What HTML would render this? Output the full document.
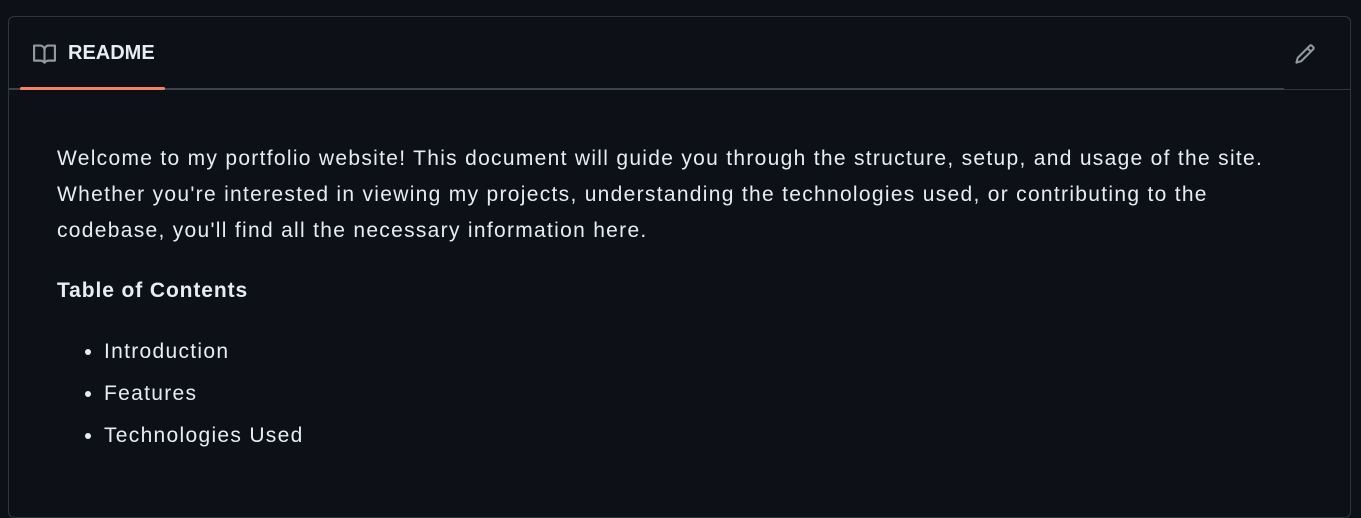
<!DOCTYPE html>
<html><head><style>
html,body{margin:0;background:#0d1117;width:1361px;height:476px;overflow:hidden;font-family:"Liberation Sans",sans-serif;color:#e6edf3}
.box{position:absolute;left:8px;top:16px;width:1341px;height:500px;border:1px solid #30363d;border-radius:6px;}
.hdr{position:absolute;left:0;top:0;right:0;height:72px;border-bottom:1px solid #30363d}
.line2{position:absolute;left:0;top:71px;width:1275px;height:2px;background:#3d434b}
.tab{position:absolute;left:11px;top:0;width:145px;height:72px}
.tab .ul{position:absolute;left:0;bottom:-1px;width:145px;height:3px;background:#f78166;border-radius:2px}
.tab span{position:absolute;left:48px;top:25px;font-weight:bold;font-size:20px}
.tab svg{position:absolute;left:12px;top:26px}
.pen{position:absolute;left:1285px;top:26px}
.c{position:absolute;left:48px;top:124px;width:1280px;font-size:21px;line-height:36px;letter-spacing:1.3px;white-space:nowrap}
p{margin:0}
ul{margin:0;padding-left:47px;line-height:42px}
</style></head><body>
<div class="box">
<div class="hdr"></div><div class="line2"></div>
<div class="tab"><svg width="25" height="23" viewBox="0 0 16 16" fill="#9198a1"><path d="M0 1.75A.75.75 0 0 1 .75 1h4.253c1.227 0 2.317.59 3 1.501A3.743 3.743 0 0 1 11.006 1h4.245a.75.75 0 0 1 .75.75v10.5a.75.75 0 0 1-.75.75h-4.507a2.25 2.25 0 0 0-1.591.659l-.622.621a.75.75 0 0 1-1.06 0l-.622-.621A2.25 2.25 0 0 0 5.258 13H.75a.75.75 0 0 1-.75-.75Zm7.251 10.324.004-5.073-.002-2.253A2.25 2.25 0 0 0 5.003 2.5H1.5v9h3.757a3.75 3.75 0 0 1 1.994.574ZM8.755 4.75l-.004 7.322a3.752 3.752 0 0 1 1.992-.572H14.5v-9h-3.495a2.25 2.25 0 0 0-2.25 2.25Z"/></svg><span>README</span><div class="ul"></div></div>
<svg class="pen" width="22" height="22" viewBox="0 0 16 16" fill="#9198a1"><path d="M11.013 1.427a1.75 1.75 0 0 1 2.474 0l1.086 1.086a1.750 1.750 0 0 1 0 2.474l-8.61 8.61c-.21.21-.47.364-.756.445l-3.251.93a.75.75 0 0 1-.927-.928l.929-3.250c.081-.286.235-.547.445-.758l8.61-8.61Zm.176 4.823L9.75 4.81l-6.286 6.287a.253.253 0 0 0-.064.108l-.558 1.953 1.953-.558a.253.253 0 0 0 .108-.064Zm1.238-3.763a.25.25 0 0 0-.354 0L10.811 3.75l1.439 1.44 1.263-1.263a.25.25 0 0 0 0-.354Z"/></svg>
<div class="c">
<p>Welcome to my portfolio website! This document will guide you through the structure, setup, and usage of the site.<br>Whether you're interested in viewing my projects, understanding the technologies used, or contributing to the<br>codebase, you'll find all the necessary information here.</p>
<p style="font-weight:bold;margin-top:24px;letter-spacing:0.9px">Table of Contents</p>
<ul style="margin-top:22px"><li>Introduction</li><li>Features</li><li>Technologies Used</li></ul>
</div>
</div>
</body></html>
